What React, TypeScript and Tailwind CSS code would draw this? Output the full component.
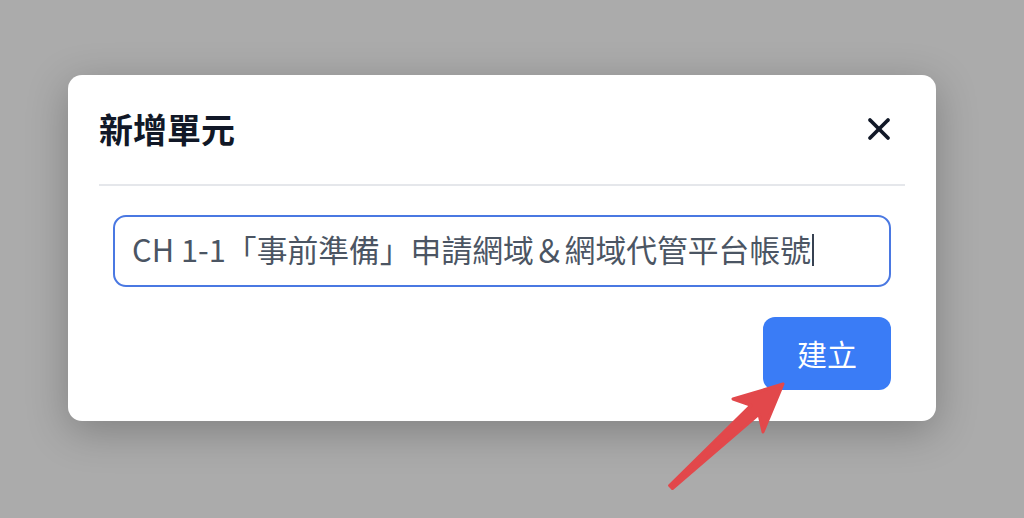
import React from 'react';

const FONT = '"Noto Sans CJK TC", "Liberation Sans", sans-serif';

function CloseIcon() {
  return (
    <svg width="24" height="24" viewBox="0 0 24 24" fill="none" stroke="#111827" strokeWidth="3.8" strokeLinecap="round">
      <path d="M3 3 L21 21" />
      <path d="M21 3 L3 21" />
    </svg>
  );
}

// red annotation arrow pointing at the button
function Arrow() {
  return (
    <svg className="pointer-events-none absolute left-0 top-0" width="1024" height="518" viewBox="0 0 1024 518">
      <polygon
        points="783,384 733,399 751,405.3 669.6,485.5 672.4,488.5 759,414.1 763,432"
        fill="#e2484b"
        stroke="#e2484b"
        strokeWidth="3"
        strokeLinejoin="round"
      />
    </svg>
  );
}

export default function App() {
  const value = 'CH 1-1「事前準備」申請網域＆網域代管平台帳號';

  return (
    <div className="relative h-[518px] w-full overflow-hidden bg-[#ababab] pl-[68px] pt-[75px]" style={{ fontFamily: FONT }}>
      <div className="w-[868px] rounded-[14px] bg-white shadow-[0_10px_40px_rgba(0,0,0,0.25)]">
        {/* Header */}
        <div className="mx-[31px] flex h-[111px] items-center justify-between border-b-2 border-[#e5e7eb] pb-[2px]">
          <h2 className="text-[34px] font-bold leading-none text-[#111827]">新增單元</h2>
          <button className="mr-[14px] flex items-center justify-center">
            <CloseIcon />
          </button>
        </div>

        {/* Body */}
        <div className="px-[45px] pb-[31px] pt-[29px]">
          <div className="flex h-[72px] items-center rounded-[13px] border-2 border-[#4a78e2] pb-[3px] pl-[17px]">
            <span className="text-[30.8px] leading-none text-[#4b5563]">{value}</span>
            <span className="ml-[1px] h-[32px] w-[2px] bg-[#374151]" />
          </div>
          <div className="mt-[30px] flex justify-end">
            <button className="flex h-[73px] w-[128px] items-center justify-center rounded-[12px] bg-[#3a7cf6] text-[30px] text-white">
              建立
            </button>
          </div>
        </div>
      </div>
      <Arrow />
    </div>
  );
}
